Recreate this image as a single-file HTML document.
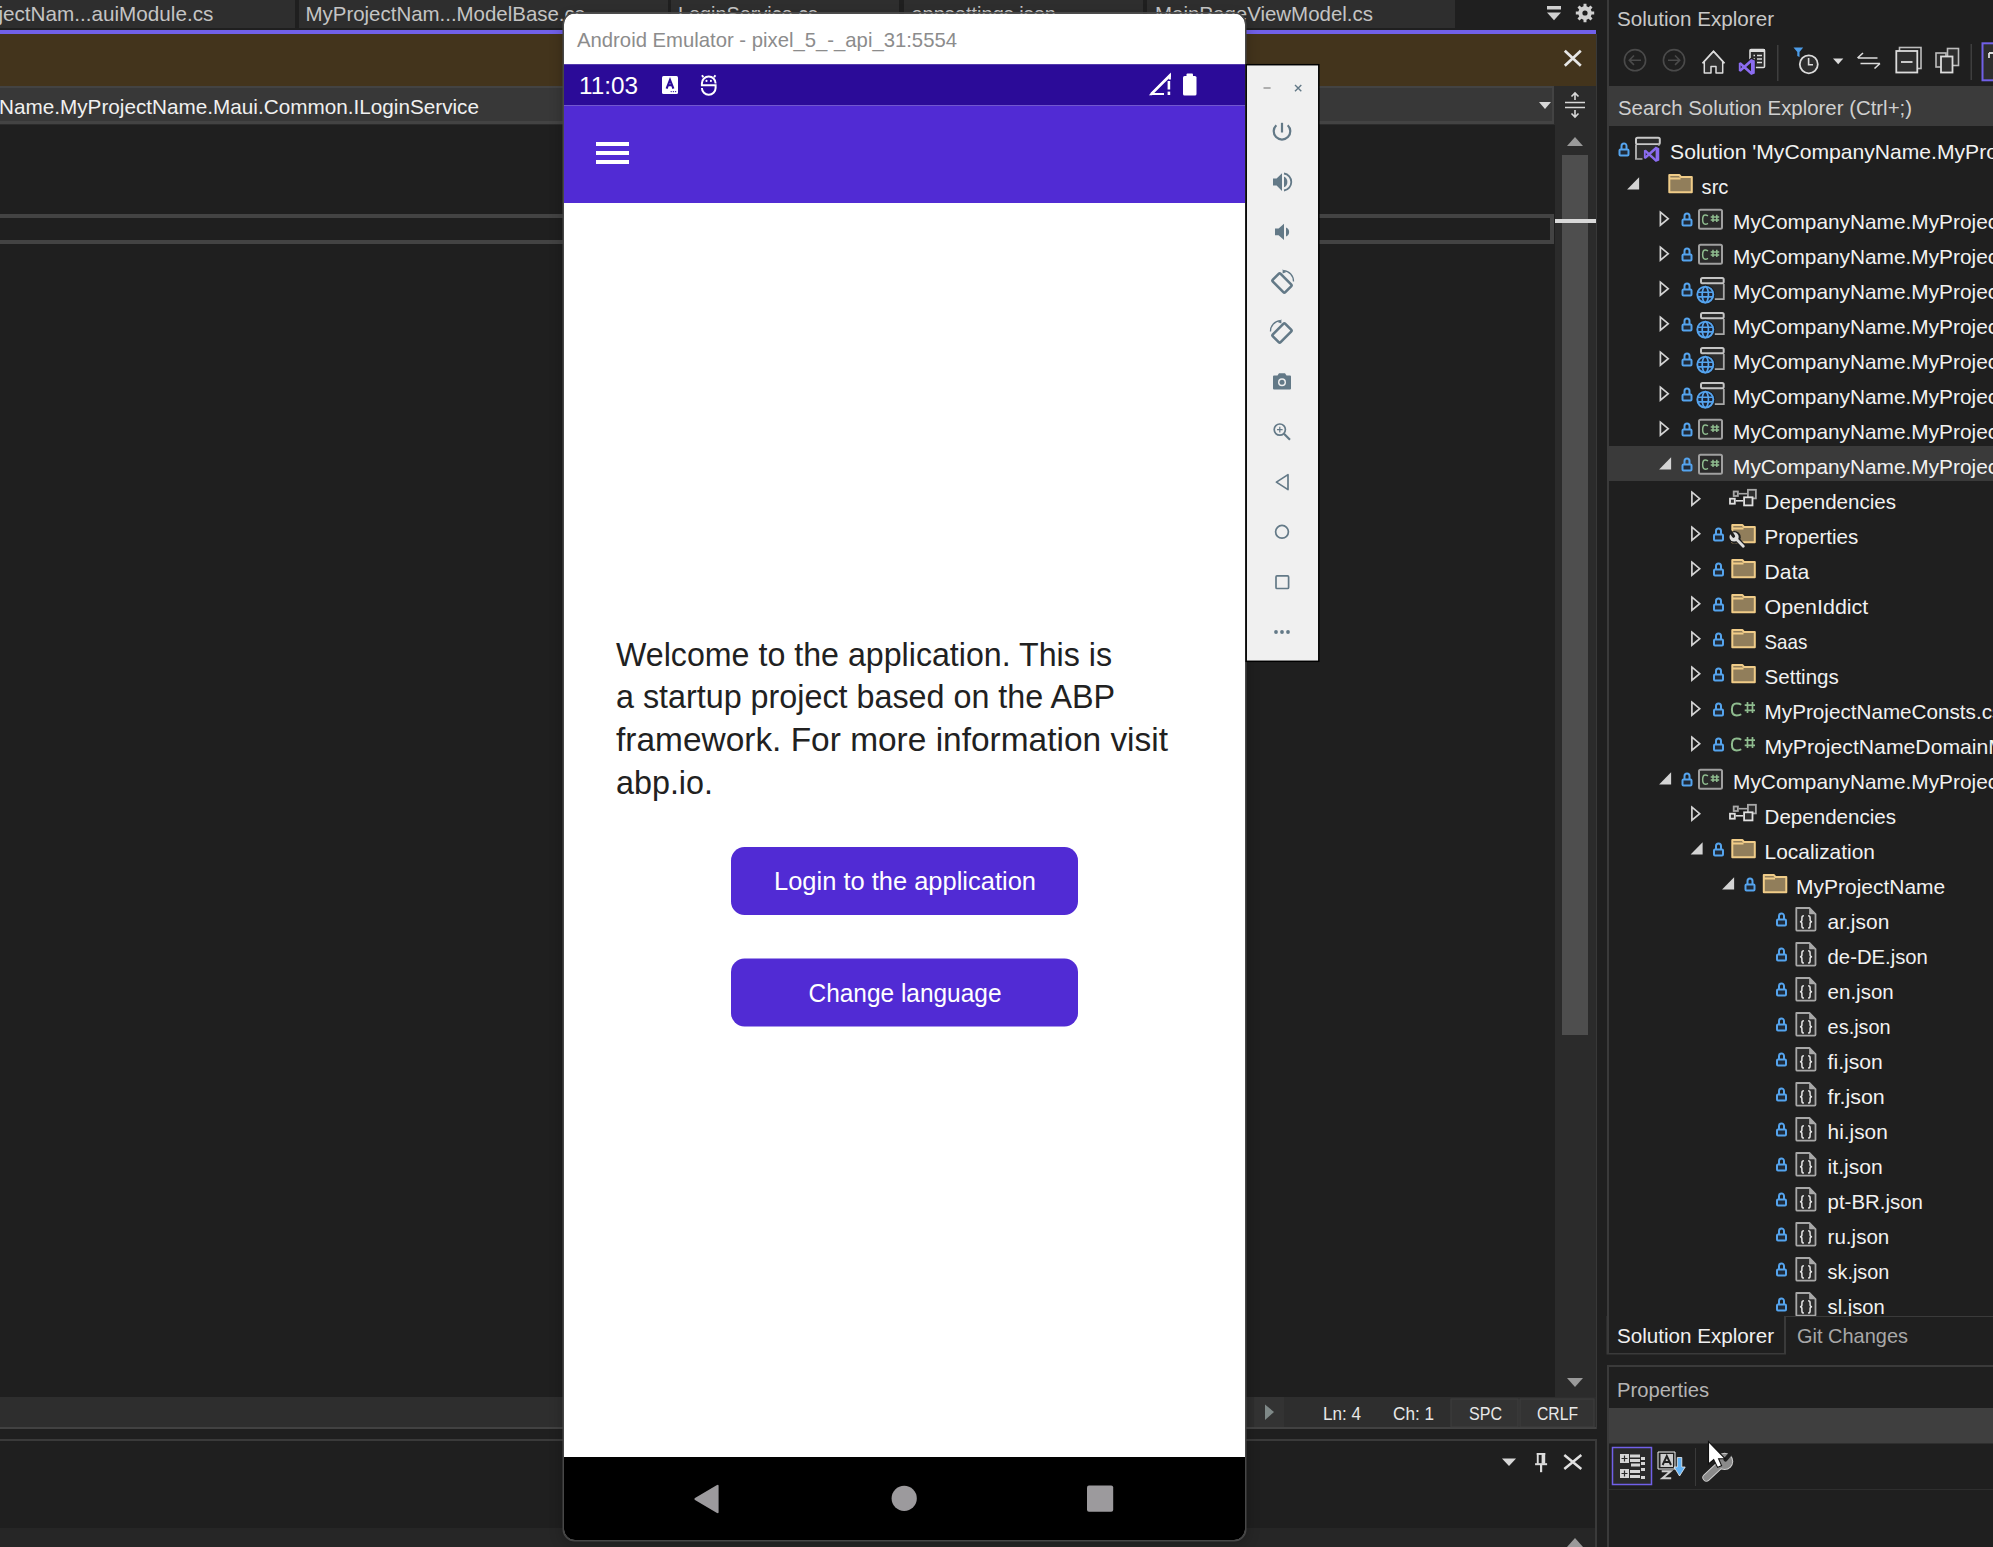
<!DOCTYPE html>
<html><head><meta charset="utf-8"><title>VS</title>
<style>html,body{margin:0;padding:0;background:#1f1f1f;overflow:hidden}svg{display:block}text{font-family:"Liberation Sans",sans-serif;white-space:pre}</style>
</head><body>
<svg width="1993" height="1547" viewBox="0 0 1993 1547">
<rect x="0" y="0" width="1993" height="1547" fill="#1f1f1f" />
<rect x="-20" y="0" width="315" height="28" fill="#2e2e2e" />
<rect x="299" y="0" width="369" height="28" fill="#2e2e2e" />
<rect x="671" y="0" width="228" height="28" fill="#2e2e2e" />
<rect x="904" y="0" width="239" height="28" fill="#2e2e2e" />
<rect x="1147" y="0" width="308" height="28" fill="#2e2e2e" />
<text x="-1.6" y="21" font-size="20.4" fill="#c4c4c4" textLength="215" lengthAdjust="spacingAndGlyphs" >jectNam...auiModule.cs</text>
<text x="305.5" y="21" font-size="20.4" fill="#c4c4c4" textLength="279.5" lengthAdjust="spacingAndGlyphs" >MyProjectNam...ModelBase.cs</text>
<text x="678" y="21" font-size="20.4" fill="#c4c4c4" textLength="140" lengthAdjust="spacingAndGlyphs" >LoginService.cs</text>
<text x="911.5" y="21" font-size="20.4" fill="#c4c4c4" textLength="144.5" lengthAdjust="spacingAndGlyphs" >appsettings.json</text>
<text x="1155" y="21" font-size="20.4" fill="#c4c4c4" textLength="218" lengthAdjust="spacingAndGlyphs" >MainPageViewModel.cs</text>
<rect x="1547" y="6" width="14" height="3.5" fill="#d0d0d0" />
<path d="M1547 12.5 L1561 12.5 L1554 20.3 Z" fill="#d0d0d0"/>
<path d="M1591.63 11.47 L1594.19 11.55 L1594.19 14.45 L1591.63 14.53 L1590.77 16.60 L1592.52 18.47 L1590.47 20.52 L1588.60 18.77 L1586.53 19.63 L1586.45 22.19 L1583.55 22.19 L1583.47 19.63 L1581.40 18.77 L1579.53 20.52 L1577.48 18.47 L1579.23 16.60 L1578.37 14.53 L1575.81 14.45 L1575.81 11.55 L1578.37 11.47 L1579.23 9.40 L1577.48 7.53 L1579.53 5.48 L1581.40 7.23 L1583.47 6.37 L1583.55 3.81 L1586.45 3.81 L1586.53 6.37 L1588.60 7.23 L1590.47 5.48 L1592.52 7.53 L1590.77 9.40 Z M1587.6 13 A2.6 2.6 0 1 0 1582.4 13 A2.6 2.6 0 1 0 1587.6 13 Z" fill="#d0d0d0" fill-rule="evenodd"/>
<rect x="0" y="30" width="1596" height="4" fill="#7160e8" />
<rect x="0" y="34" width="1596" height="52" fill="#43341c" />
<rect x="1596" y="34" width="1" height="1395" fill="#383838" />
<path d="M1564.8 50.8 L1580.8 65.8 M1580.8 50.8 L1564.8 65.8" stroke="#e6e6e6" stroke-width="2.7"/>
<rect x="0" y="86" width="1596" height="39" fill="#2b2b2b" />
<rect x="0" y="86" width="1554" height="38" fill="#434343" />
<rect x="0" y="88" width="1552" height="33" fill="#383838" />
<text x="-1" y="114" font-size="20.7" fill="#f0f0f0" textLength="480" lengthAdjust="spacingAndGlyphs" >Name.MyProjectName.Maui.Common.ILoginService</text>
<path d="M1539 102 L1551 102 L1545 109 Z" fill="#d8d8d8"/>
<g stroke="#d8d8d8" stroke-width="1.6" fill="none"><path d="M1565 102.5 H1585 M1565 107.5 H1585 M1575 93 V100 M1575 110 V117 M1571.5 96.5 L1575 93 L1578.5 96.5 M1571.5 113.5 L1575 117 L1578.5 113.5"/></g>
<rect x="0" y="125" width="1555" height="1272" fill="#1f1f1f" />
<rect x="-4" y="216" width="1556" height="26" fill="none" stroke="#434343" stroke-width="4"/>
<rect x="1555" y="125" width="41" height="1272" fill="#2b2b2b" />
<path d="M1567 146 L1583 146 L1575 137 Z" fill="#9a9a9a"/>
<rect x="1562" y="155" width="26" height="880" fill="#4e4e4e" />
<rect x="1555" y="219" width="41" height="4" fill="#d8d8d8" />
<path d="M1567 1378 L1583 1378 L1575 1387 Z" fill="#9a9a9a"/>
<rect x="0" y="1397" width="1596" height="31" fill="#2e2e2e" />
<rect x="0" y="1427" width="1596" height="2" fill="#424242" />
<rect x="1451" y="1399" width="67" height="28" fill="#333333" stroke="#3e3e3e" stroke-width="1"/>
<rect x="1520" y="1399" width="74" height="28" fill="#333333" stroke="#3e3e3e" stroke-width="1"/>
<rect x="1254" y="1397" width="30" height="30" fill="#333333" />
<path d="M1265 1404.5 L1274 1412 L1265 1420 Z" fill="#7f8988"/>
<text x="1323" y="1420" font-size="17.5" fill="#e8e8e8" textLength="38" lengthAdjust="spacingAndGlyphs" >Ln: 4</text>
<text x="1393" y="1420" font-size="17.5" fill="#e8e8e8" textLength="41" lengthAdjust="spacingAndGlyphs" >Ch: 1</text>
<text x="1469" y="1420" font-size="17.5" fill="#e8e8e8" textLength="33" lengthAdjust="spacingAndGlyphs" >SPC</text>
<text x="1537" y="1420" font-size="17.5" fill="#e8e8e8" textLength="41" lengthAdjust="spacingAndGlyphs" >CRLF</text>
<rect x="0" y="1439" width="1597" height="108" fill="#1f1f1f" />
<rect x="0" y="1439" width="1597" height="2" fill="#3a3a3a" />
<rect x="1595" y="1439" width="2" height="108" fill="#3a3a3a" />
<path d="M1502 1458.5 L1516 1458.5 L1509 1466 Z" fill="#d8d8d8"/>
<g fill="#dcdcdc"><rect x="1536.8" y="1453" width="1.9" height="10.8"/><rect x="1541.6" y="1453" width="3.6" height="10.8"/><rect x="1536.8" y="1453" width="8.4" height="1.9"/><rect x="1535.1" y="1463.2" width="12" height="2"/><rect x="1540" y="1465" width="2.2" height="7.2"/></g>
<path d="M1564.3 1455 L1581.3 1469 M1581.3 1455 L1564.3 1469" stroke="#e0e0e0" stroke-width="2.5"/>
<rect x="0" y="1528" width="1595" height="19" fill="#262626" />
<path d="M1567 1547 L1583 1547 L1575 1538 Z" fill="#9a9a9a"/>
<rect x="1607" y="0" width="2" height="1354" fill="#3a3a3a" />
<text x="1617" y="26" font-size="20.6" fill="#c8c8c8" textLength="157" lengthAdjust="spacingAndGlyphs" >Solution Explorer</text>
<circle cx="1635" cy="60.2" r="10.6" fill="none" stroke="#4a4a4a" stroke-width="1.6"/><path d="M1641 60.2 H1629.5 M1634 55.5 L1629.3 60.2 L1634 64.9" stroke="#4a4a4a" stroke-width="1.6" fill="none"/>
<circle cx="1674" cy="60.2" r="10.6" fill="none" stroke="#4a4a4a" stroke-width="1.6"/><path d="M1668 60.2 H1679.5 M1675 55.5 L1679.7 60.2 L1675 64.9" stroke="#4a4a4a" stroke-width="1.6" fill="none"/>
<path d="M1702.5 63.3 L1713.5 51.3 L1724.5 63.3" stroke="#dcdcdc" stroke-width="1.8" fill="none"/><path d="M1704.3 61.5 V73 H1711 V66.5 H1716 V73 H1722.7 V61.5 L1713.5 51.5 Z" fill="#2e2e2e" stroke="#dcdcdc" stroke-width="1.5" stroke-linejoin="round"/>
<rect x="1750" y="49.5" width="14.5" height="18" rx="1" fill="#2a2a2a" stroke="#dcdcdc" stroke-width="1.6"/><rect x="1750" y="49" width="15" height="3" fill="#dcdcdc"/>
<path d="M1753.5 55.5 H1755 M1757 55.5 H1762 M1753.5 59 H1755 M1757 59 H1762 M1757 62.5 H1762" stroke="#dcdcdc" stroke-width="1.4"/>
<rect x="1777" y="45" width="1.5" height="36" fill="#3e3e3e" />
<path d="M1793.5 47.5 H1803.2 L1799.5 52 V57 L1797.3 56 V52 Z" fill="#4c9ce8"/>
<circle cx="1808.8" cy="64.3" r="9" fill="#2e2e2e" stroke="#dcdcdc" stroke-width="1.8"/><path d="M1808.6 58 V64.8 H1813" stroke="#dcdcdc" stroke-width="1.6" fill="none"/>
<path d="M1833 58.5 H1843.3 L1838.2 64.3 Z" fill="#dcdcdc"/>
<path d="M1858 58 H1877.5 M1857.5 58 L1863 53 M1860.5 63.5 H1880 M1880 63.5 L1874.5 68.5" stroke="#dcdcdc" stroke-width="1.6" fill="none"/>
<rect x="1899.5" y="47.5" width="21.5" height="21" fill="none" stroke="#bdbdbd" stroke-width="1.6"/><rect x="1896.3" y="51" width="21" height="21.5" fill="#2e2e2e" stroke="#dcdcdc" stroke-width="1.8"/><path d="M1901 62 H1912.5" stroke="#dcdcdc" stroke-width="1.8"/>
<rect x="1947.5" y="48.5" width="11" height="17" fill="#2e2e2e" stroke="#bdbdbd" stroke-width="1.6"/><rect x="1936" y="53" width="10" height="14" fill="#2e2e2e" stroke="#bdbdbd" stroke-width="1.6"/><rect x="1941" y="56.5" width="11.5" height="16" fill="#2e2e2e" stroke="#dcdcdc" stroke-width="1.8"/>
<rect x="1970.5" y="44" width="1.5" height="36" fill="#3e3e3e" />
<rect x="1982.5" y="43.3" width="20" height="37" fill="#2e2e2e" stroke="#7160e8" stroke-width="2"/><path d="M1989 53 H1993 M1989 53 V58" stroke="#dcdcdc" stroke-width="1.8"/>
<rect x="1609" y="86" width="384" height="40" fill="#3b3b3b" />
<text x="1618" y="114.5" font-size="20.4" fill="#d0d0d0" textLength="294" lengthAdjust="spacingAndGlyphs" >Search Solution Explorer (Ctrl+;)</text>
<rect x="1609" y="446" width="384" height="35" fill="#3a3a3a" />
<svg x="0" y="0" width="1993" height="1316" overflow="hidden">
<path d="M1621.5 149.39999999999998 V145.89999999999998 A2.5 2.5 0 0 1 1626.5 145.89999999999998 V149.39999999999998" stroke="#55a4ee" stroke-width="2" fill="none"/>
<rect x="1619.5" y="149.39999999999998" width="9" height="6.2" fill="#1f2a38" stroke="#55a4ee" stroke-width="2" rx="1"/>
<path d="M1636.0 144.7 V158.7 H1642.5" fill="none" stroke="#a8a8a8" stroke-width="2"/>
<rect x="1636.0" y="137.79999999999998" width="23.8" height="6.4" rx="1.5" fill="#2a2a2a" stroke="#c8c8c8" stroke-width="2"/>
<path d="M1658.8 144.2 V145.7" stroke="#a8a8a8" stroke-width="2"/>
<rect x="1637.0" y="145.2" width="21" height="13" fill="#2c2c2c"/>
<g transform="translate(1643.9 146.6) scale(0.96)" fill="#8b6cf0"><path d="M0 3.9 L1.9 3.2 V12.8 L0 12.1 Z"/><path d="M12.2 0 L16 1.6 V14.4 L12.2 16 Z"/><path d="M1.2 11.8 L13 1.2 M1.2 4.2 L13 14.8" stroke="#8b6cf0" stroke-width="2.6" stroke-linecap="butt"/></g>
<text x="1670.1" y="158.7" font-size="20.3" fill="#f2f2f2" textLength="597.1" lengthAdjust="spacingAndGlyphs" >Solution 'MyCompanyName.MyProjectName' (12 of 12 projects)</text>
<path d="M1639.1 177.29999999999998 L1639.1 189.39999999999998 L1627.1 189.39999999999998 Z" fill="#d4d4d4"/>
<path d="M1669.3 192.2 V175.1 H1679.5 L1681.1 177.1 H1691.8 V192.2 Z" fill="#917e5b" stroke="#f0cc88" stroke-width="2" stroke-linejoin="round"/>
<path d="M1669.3 178.5 H1680.5" stroke="#f0cc88" stroke-width="2"/>
<text x="1701.6" y="193.7" font-size="20.3" fill="#f2f2f2" textLength="26.8" lengthAdjust="spacingAndGlyphs" >src</text>
<path d="M1660.3999999999999 212.2 L1668.1999999999998 218.7 L1660.3999999999999 225.2 Z" fill="none" stroke="#d4d4d4" stroke-width="1.7" stroke-linejoin="miter"/>
<path d="M1684.5 219.39999999999998 V215.89999999999998 A2.5 2.5 0 0 1 1689.5 215.89999999999998 V219.39999999999998" stroke="#55a4ee" stroke-width="2" fill="none"/>
<rect x="1682.5" y="219.39999999999998" width="9" height="6.2" fill="#1f2a38" stroke="#55a4ee" stroke-width="2" rx="1"/>
<rect x="1699.0" y="209.7" width="23" height="19" rx="1.5" fill="#2a2a2a" stroke="#a0a0a0" stroke-width="2"/>
<path d="M1708.0 215.84 Q1706.4 214.89999999999998 1705.33 214.89999999999998 Q1702.65 214.89999999999998 1702.65 219.60 Q1702.65 224.29999999999998 1705.33 224.29999999999998 Q1706.4 224.29999999999998 1708.0 223.36" stroke="#8fbc8f" stroke-width="1.5" fill="none"/>
<path d="M1713.0 214.79999999999998 V222.1 M1716.8 214.79999999999998 V222.1 M1710.7 217.1 H1719.2 M1710.7 219.89999999999998 H1719.2" stroke="#8fbc8f" stroke-width="1.5" fill="none"/>
<text x="1733.1" y="228.7" font-size="20.3" fill="#f2f2f2" textLength="434.07" lengthAdjust="spacingAndGlyphs" >MyCompanyName.MyProjectName.Application</text>
<path d="M1660.3999999999999 247.2 L1668.1999999999998 253.7 L1660.3999999999999 260.2 Z" fill="none" stroke="#d4d4d4" stroke-width="1.7" stroke-linejoin="miter"/>
<path d="M1684.5 254.39999999999998 V250.89999999999998 A2.5 2.5 0 0 1 1689.5 250.89999999999998 V254.39999999999998" stroke="#55a4ee" stroke-width="2" fill="none"/>
<rect x="1682.5" y="254.39999999999998" width="9" height="6.2" fill="#1f2a38" stroke="#55a4ee" stroke-width="2" rx="1"/>
<rect x="1699.0" y="244.7" width="23" height="19" rx="1.5" fill="#2a2a2a" stroke="#a0a0a0" stroke-width="2"/>
<path d="M1708.0 250.84 Q1706.4 249.89999999999998 1705.33 249.89999999999998 Q1702.65 249.89999999999998 1702.65 254.60 Q1702.65 259.3 1705.33 259.3 Q1706.4 259.3 1708.0 258.36" stroke="#8fbc8f" stroke-width="1.5" fill="none"/>
<path d="M1713.0 249.79999999999998 V257.09999999999997 M1716.8 249.79999999999998 V257.09999999999997 M1710.7 252.1 H1719.2 M1710.7 254.89999999999998 H1719.2" stroke="#8fbc8f" stroke-width="1.5" fill="none"/>
<text x="1733.1" y="263.7" font-size="20.3" fill="#f2f2f2" textLength="528.99" lengthAdjust="spacingAndGlyphs" >MyCompanyName.MyProjectName.Application.Contracts</text>
<path d="M1660.3999999999999 282.2 L1668.1999999999998 288.7 L1660.3999999999999 295.2 Z" fill="none" stroke="#d4d4d4" stroke-width="1.7" stroke-linejoin="miter"/>
<path d="M1684.5 289.4 V285.9 A2.5 2.5 0 0 1 1689.5 285.9 V289.4" stroke="#55a4ee" stroke-width="2" fill="none"/>
<rect x="1682.5" y="289.4" width="9" height="6.2" fill="#1f2a38" stroke="#55a4ee" stroke-width="2" rx="1"/>
<rect x="1701.0" y="284.09999999999997" width="22.7" height="15" fill="#2c2c2c"/>
<path d="M1723.8 284.09999999999997 V299.2 H1714.8" fill="none" stroke="#a8a8a8" stroke-width="1.8"/>
<rect x="1701.0" y="277.9" width="22.7" height="5.3" rx="1.5" fill="#2a2a2a" stroke="#c4c4c4" stroke-width="2"/>
<circle cx="1705.3" cy="294.59999999999997" r="10" fill="#1f1f1f"/>
<circle cx="1705.3" cy="294.59999999999997" r="8.9" fill="#1c2233"/>
<g stroke="#55a4ee" fill="none"><circle cx="1705.3" cy="294.59999999999997" r="8" stroke-width="1.9"/><ellipse cx="1705.3" cy="294.59999999999997" rx="3.1" ry="8" stroke-width="1.7"/><path d="M1697.3 292.29999999999995 H1713.3 M1697.3 296.9 H1713.3" stroke-width="1.6"/></g>
<text x="1733.1" y="298.7" font-size="20.3" fill="#f2f2f2" textLength="436.37" lengthAdjust="spacingAndGlyphs" >MyCompanyName.MyProjectName.AuthServer</text>
<path d="M1660.3999999999999 317.2 L1668.1999999999998 323.7 L1660.3999999999999 330.2 Z" fill="none" stroke="#d4d4d4" stroke-width="1.7" stroke-linejoin="miter"/>
<path d="M1684.5 324.4 V320.9 A2.5 2.5 0 0 1 1689.5 320.9 V324.4" stroke="#55a4ee" stroke-width="2" fill="none"/>
<rect x="1682.5" y="324.4" width="9" height="6.2" fill="#1f2a38" stroke="#55a4ee" stroke-width="2" rx="1"/>
<rect x="1701.0" y="319.09999999999997" width="22.7" height="15" fill="#2c2c2c"/>
<path d="M1723.8 319.09999999999997 V334.2 H1714.8" fill="none" stroke="#a8a8a8" stroke-width="1.8"/>
<rect x="1701.0" y="312.9" width="22.7" height="5.3" rx="1.5" fill="#2a2a2a" stroke="#c4c4c4" stroke-width="2"/>
<circle cx="1705.3" cy="329.59999999999997" r="10" fill="#1f1f1f"/>
<circle cx="1705.3" cy="329.59999999999997" r="8.9" fill="#1c2233"/>
<g stroke="#55a4ee" fill="none"><circle cx="1705.3" cy="329.59999999999997" r="8" stroke-width="1.9"/><ellipse cx="1705.3" cy="329.59999999999997" rx="3.1" ry="8" stroke-width="1.7"/><path d="M1697.3 327.29999999999995 H1713.3 M1697.3 331.9 H1713.3" stroke-width="1.6"/></g>
<text x="1733.1" y="333.7" font-size="20.3" fill="#f2f2f2" textLength="391.22" lengthAdjust="spacingAndGlyphs" >MyCompanyName.MyProjectName.Blazor</text>
<path d="M1660.3999999999999 352.2 L1668.1999999999998 358.7 L1660.3999999999999 365.2 Z" fill="none" stroke="#d4d4d4" stroke-width="1.7" stroke-linejoin="miter"/>
<path d="M1684.5 359.4 V355.9 A2.5 2.5 0 0 1 1689.5 355.9 V359.4" stroke="#55a4ee" stroke-width="2" fill="none"/>
<rect x="1682.5" y="359.4" width="9" height="6.2" fill="#1f2a38" stroke="#55a4ee" stroke-width="2" rx="1"/>
<rect x="1701.0" y="354.09999999999997" width="22.7" height="15" fill="#2c2c2c"/>
<path d="M1723.8 354.09999999999997 V369.2 H1714.8" fill="none" stroke="#a8a8a8" stroke-width="1.8"/>
<rect x="1701.0" y="347.9" width="22.7" height="5.3" rx="1.5" fill="#2a2a2a" stroke="#c4c4c4" stroke-width="2"/>
<circle cx="1705.3" cy="364.59999999999997" r="10" fill="#1f1f1f"/>
<circle cx="1705.3" cy="364.59999999999997" r="8.9" fill="#1c2233"/>
<g stroke="#55a4ee" fill="none"><circle cx="1705.3" cy="364.59999999999997" r="8" stroke-width="1.9"/><ellipse cx="1705.3" cy="364.59999999999997" rx="3.1" ry="8" stroke-width="1.7"/><path d="M1697.3 362.29999999999995 H1713.3 M1697.3 366.9 H1713.3" stroke-width="1.6"/></g>
<text x="1733.1" y="368.7" font-size="20.3" fill="#f2f2f2" textLength="449.1" lengthAdjust="spacingAndGlyphs" >MyCompanyName.MyProjectName.HttpApi.Host</text>
<path d="M1660.3999999999999 387.2 L1668.1999999999998 393.7 L1660.3999999999999 400.2 Z" fill="none" stroke="#d4d4d4" stroke-width="1.7" stroke-linejoin="miter"/>
<path d="M1684.5 394.4 V390.9 A2.5 2.5 0 0 1 1689.5 390.9 V394.4" stroke="#55a4ee" stroke-width="2" fill="none"/>
<rect x="1682.5" y="394.4" width="9" height="6.2" fill="#1f2a38" stroke="#55a4ee" stroke-width="2" rx="1"/>
<rect x="1701.0" y="389.09999999999997" width="22.7" height="15" fill="#2c2c2c"/>
<path d="M1723.8 389.09999999999997 V404.2 H1714.8" fill="none" stroke="#a8a8a8" stroke-width="1.8"/>
<rect x="1701.0" y="382.9" width="22.7" height="5.3" rx="1.5" fill="#2a2a2a" stroke="#c4c4c4" stroke-width="2"/>
<circle cx="1705.3" cy="399.59999999999997" r="10" fill="#1f1f1f"/>
<circle cx="1705.3" cy="399.59999999999997" r="8.9" fill="#1c2233"/>
<g stroke="#55a4ee" fill="none"><circle cx="1705.3" cy="399.59999999999997" r="8" stroke-width="1.9"/><ellipse cx="1705.3" cy="399.59999999999997" rx="3.1" ry="8" stroke-width="1.7"/><path d="M1697.3 397.29999999999995 H1713.3 M1697.3 401.9 H1713.3" stroke-width="1.6"/></g>
<text x="1733.1" y="403.7" font-size="20.3" fill="#f2f2f2" textLength="437.14" lengthAdjust="spacingAndGlyphs" >MyCompanyName.MyProjectName.Web.Public</text>
<path d="M1660.3999999999999 422.2 L1668.1999999999998 428.7 L1660.3999999999999 435.2 Z" fill="none" stroke="#d4d4d4" stroke-width="1.7" stroke-linejoin="miter"/>
<path d="M1684.5 429.4 V425.9 A2.5 2.5 0 0 1 1689.5 425.9 V429.4" stroke="#55a4ee" stroke-width="2" fill="none"/>
<rect x="1682.5" y="429.4" width="9" height="6.2" fill="#1f2a38" stroke="#55a4ee" stroke-width="2" rx="1"/>
<rect x="1699.0" y="419.7" width="23" height="19" rx="1.5" fill="#2a2a2a" stroke="#a0a0a0" stroke-width="2"/>
<path d="M1708.0 425.84 Q1706.4 424.9 1705.33 424.9 Q1702.65 424.9 1702.65 429.60 Q1702.65 434.3 1705.33 434.3 Q1706.4 434.3 1708.0 433.36" stroke="#8fbc8f" stroke-width="1.5" fill="none"/>
<path d="M1713.0 424.8 V432.09999999999997 M1716.8 424.8 V432.09999999999997 M1710.7 427.09999999999997 H1719.2 M1710.7 429.9 H1719.2" stroke="#8fbc8f" stroke-width="1.5" fill="none"/>
<text x="1733.1" y="438.7" font-size="20.3" fill="#f2f2f2" textLength="435.19" lengthAdjust="spacingAndGlyphs" >MyCompanyName.MyProjectName.DbMigrator</text>
<path d="M1671.1 457.3 L1671.1 469.4 L1659.1 469.4 Z" fill="#d4d4d4"/>
<path d="M1684.5 464.4 V460.9 A2.5 2.5 0 0 1 1689.5 460.9 V464.4" stroke="#55a4ee" stroke-width="2" fill="none"/>
<rect x="1682.5" y="464.4" width="9" height="6.2" fill="#1f2a38" stroke="#55a4ee" stroke-width="2" rx="1"/>
<rect x="1699.0" y="454.7" width="23" height="19" rx="1.5" fill="#2a2a2a" stroke="#a0a0a0" stroke-width="2"/>
<path d="M1708.0 460.84 Q1706.4 459.9 1705.33 459.9 Q1702.65 459.9 1702.65 464.60 Q1702.65 469.3 1705.33 469.3 Q1706.4 469.3 1708.0 468.36" stroke="#8fbc8f" stroke-width="1.5" fill="none"/>
<path d="M1713.0 459.8 V467.09999999999997 M1716.8 459.8 V467.09999999999997 M1710.7 462.09999999999997 H1719.2 M1710.7 464.9 H1719.2" stroke="#8fbc8f" stroke-width="1.5" fill="none"/>
<text x="1733.1" y="473.7" font-size="20.3" fill="#f2f2f2" textLength="403.95" lengthAdjust="spacingAndGlyphs" >MyCompanyName.MyProjectName.Domain</text>
<path d="M1691.8999999999999 492.2 L1699.6999999999998 498.7 L1691.8999999999999 505.2 Z" fill="none" stroke="#d4d4d4" stroke-width="1.7" stroke-linejoin="miter"/>
<path d="M1738.8 493.7 H1747.0" stroke="#a8a8a8" stroke-width="1.6"/>
<g fill="#2e2e2e" stroke="#a8a8a8" stroke-width="1.8"><rect x="1733.7" y="491.5" width="4.2" height="4.5"/><rect x="1747.9" y="489.8" width="8" height="8.6"/></g>
<path d="M1735.7 500.8 H1743.2" stroke="#e0e0e0" stroke-width="1.6"/>
<g fill="#2e2e2e" stroke="#e0e0e0" stroke-width="1.8"><rect x="1730.0" y="498.7" width="4.8" height="5"/><rect x="1744.1" y="497.3" width="8.4" height="8.1"/></g>
<text x="1764.6" y="508.7" font-size="20.3" fill="#f2f2f2" textLength="131.4" lengthAdjust="spacingAndGlyphs" >Dependencies</text>
<path d="M1691.8999999999999 527.2 L1699.6999999999998 533.7 L1691.8999999999999 540.2 Z" fill="none" stroke="#d4d4d4" stroke-width="1.7" stroke-linejoin="miter"/>
<path d="M1716.0 534.4000000000001 V530.9000000000001 A2.5 2.5 0 0 1 1721.0 530.9000000000001 V534.4000000000001" stroke="#55a4ee" stroke-width="2" fill="none"/>
<rect x="1714.0" y="534.4000000000001" width="9" height="6.2" fill="#1f2a38" stroke="#55a4ee" stroke-width="2" rx="1"/>
<path d="M1732.3 542.2 V525.1 H1742.5 L1744.1 527.1 H1754.8 V542.2 Z" fill="#917e5b" stroke="#f0cc88" stroke-width="2" stroke-linejoin="round"/>
<path d="M1732.3 528.5 H1743.5" stroke="#f0cc88" stroke-width="2"/>
<path d="M1734.5 536.7 L1743.5 546.2" stroke="#1f1f1f" stroke-width="5" stroke-linecap="round"/>
<circle cx="1734.5" cy="537.2" r="6.2" fill="#1f1f1f"/>
<path d="M1734.5 537.2 L1743.3 546.2" stroke="#dedede" stroke-width="2.8" stroke-linecap="round"/>
<circle cx="1734.1" cy="536.9000000000001" r="4.6" fill="#dedede"/>
<path d="M1733.5 536.2 L1730.5 531.7" stroke="#1f1f1f" stroke-width="3.2" stroke-linecap="round"/>
<text x="1764.6" y="543.7" font-size="20.3" fill="#f2f2f2" textLength="93.6" lengthAdjust="spacingAndGlyphs" >Properties</text>
<path d="M1691.8999999999999 562.2 L1699.6999999999998 568.7 L1691.8999999999999 575.2 Z" fill="none" stroke="#d4d4d4" stroke-width="1.7" stroke-linejoin="miter"/>
<path d="M1716.0 569.4000000000001 V565.9000000000001 A2.5 2.5 0 0 1 1721.0 565.9000000000001 V569.4000000000001" stroke="#55a4ee" stroke-width="2" fill="none"/>
<rect x="1714.0" y="569.4000000000001" width="9" height="6.2" fill="#1f2a38" stroke="#55a4ee" stroke-width="2" rx="1"/>
<path d="M1732.3 577.2 V560.1 H1742.5 L1744.1 562.1 H1754.8 V577.2 Z" fill="#917e5b" stroke="#f0cc88" stroke-width="2" stroke-linejoin="round"/>
<path d="M1732.3 563.5 H1743.5" stroke="#f0cc88" stroke-width="2"/>
<text x="1764.6" y="578.7" font-size="20.3" fill="#f2f2f2" textLength="44.7" lengthAdjust="spacingAndGlyphs" >Data</text>
<path d="M1691.8999999999999 597.2 L1699.6999999999998 603.7 L1691.8999999999999 610.2 Z" fill="none" stroke="#d4d4d4" stroke-width="1.7" stroke-linejoin="miter"/>
<path d="M1716.0 604.4000000000001 V600.9000000000001 A2.5 2.5 0 0 1 1721.0 600.9000000000001 V604.4000000000001" stroke="#55a4ee" stroke-width="2" fill="none"/>
<rect x="1714.0" y="604.4000000000001" width="9" height="6.2" fill="#1f2a38" stroke="#55a4ee" stroke-width="2" rx="1"/>
<path d="M1732.3 612.2 V595.1 H1742.5 L1744.1 597.1 H1754.8 V612.2 Z" fill="#917e5b" stroke="#f0cc88" stroke-width="2" stroke-linejoin="round"/>
<path d="M1732.3 598.5 H1743.5" stroke="#f0cc88" stroke-width="2"/>
<text x="1764.6" y="613.7" font-size="20.3" fill="#f2f2f2" textLength="103.69999999999999" lengthAdjust="spacingAndGlyphs" >OpenIddict</text>
<path d="M1691.8999999999999 632.2 L1699.6999999999998 638.7 L1691.8999999999999 645.2 Z" fill="none" stroke="#d4d4d4" stroke-width="1.7" stroke-linejoin="miter"/>
<path d="M1716.0 639.4000000000001 V635.9000000000001 A2.5 2.5 0 0 1 1721.0 635.9000000000001 V639.4000000000001" stroke="#55a4ee" stroke-width="2" fill="none"/>
<rect x="1714.0" y="639.4000000000001" width="9" height="6.2" fill="#1f2a38" stroke="#55a4ee" stroke-width="2" rx="1"/>
<path d="M1732.3 647.2 V630.1 H1742.5 L1744.1 632.1 H1754.8 V647.2 Z" fill="#917e5b" stroke="#f0cc88" stroke-width="2" stroke-linejoin="round"/>
<path d="M1732.3 633.5 H1743.5" stroke="#f0cc88" stroke-width="2"/>
<text x="1764.6" y="648.7" font-size="20.3" fill="#f2f2f2" textLength="42.7" lengthAdjust="spacingAndGlyphs" >Saas</text>
<path d="M1691.8999999999999 667.2 L1699.6999999999998 673.7 L1691.8999999999999 680.2 Z" fill="none" stroke="#d4d4d4" stroke-width="1.7" stroke-linejoin="miter"/>
<path d="M1716.0 674.4000000000001 V670.9000000000001 A2.5 2.5 0 0 1 1721.0 670.9000000000001 V674.4000000000001" stroke="#55a4ee" stroke-width="2" fill="none"/>
<rect x="1714.0" y="674.4000000000001" width="9" height="6.2" fill="#1f2a38" stroke="#55a4ee" stroke-width="2" rx="1"/>
<path d="M1732.3 682.2 V665.1 H1742.5 L1744.1 667.1 H1754.8 V682.2 Z" fill="#917e5b" stroke="#f0cc88" stroke-width="2" stroke-linejoin="round"/>
<path d="M1732.3 668.5 H1743.5" stroke="#f0cc88" stroke-width="2"/>
<text x="1764.6" y="683.7" font-size="20.3" fill="#f2f2f2" textLength="74.19999999999999" lengthAdjust="spacingAndGlyphs" >Settings</text>
<path d="M1691.8999999999999 702.2 L1699.6999999999998 708.7 L1691.8999999999999 715.2 Z" fill="none" stroke="#d4d4d4" stroke-width="1.7" stroke-linejoin="miter"/>
<path d="M1716.0 709.4000000000001 V705.9000000000001 A2.5 2.5 0 0 1 1721.0 705.9000000000001 V709.4000000000001" stroke="#55a4ee" stroke-width="2" fill="none"/>
<rect x="1714.0" y="709.4000000000001" width="9" height="6.2" fill="#1f2a38" stroke="#55a4ee" stroke-width="2" rx="1"/>
<path d="M1741.2 704.78 Q1739.6000000000001 703.6 1736.55 703.6 Q1731.9 703.6 1731.9 709.50 Q1731.9 715.4000000000001 1736.55 715.4000000000001 Q1739.6000000000001 715.4000000000001 1741.2 714.22" stroke="#8fbc8f" stroke-width="2" fill="none"/>
<path d="M1747.5 702.1 V713.1 M1752.5 702.1 V713.1 M1744.7 705.1 H1755.0 M1744.7 710.3000000000001 H1755.0" stroke="#8fbc8f" stroke-width="1.7" fill="none"/>
<text x="1764.6" y="718.7" font-size="20.3" fill="#f2f2f2" textLength="237.72" lengthAdjust="spacingAndGlyphs" >MyProjectNameConsts.cs</text>
<path d="M1691.8999999999999 737.2 L1699.6999999999998 743.7 L1691.8999999999999 750.2 Z" fill="none" stroke="#d4d4d4" stroke-width="1.7" stroke-linejoin="miter"/>
<path d="M1716.0 744.4000000000001 V740.9000000000001 A2.5 2.5 0 0 1 1721.0 740.9000000000001 V744.4000000000001" stroke="#55a4ee" stroke-width="2" fill="none"/>
<rect x="1714.0" y="744.4000000000001" width="9" height="6.2" fill="#1f2a38" stroke="#55a4ee" stroke-width="2" rx="1"/>
<path d="M1741.2 739.78 Q1739.6000000000001 738.6 1736.55 738.6 Q1731.9 738.6 1731.9 744.50 Q1731.9 750.4000000000001 1736.55 750.4000000000001 Q1739.6000000000001 750.4000000000001 1741.2 749.22" stroke="#8fbc8f" stroke-width="2" fill="none"/>
<path d="M1747.5 737.1 V748.1 M1752.5 737.1 V748.1 M1744.7 740.1 H1755.0 M1744.7 745.3000000000001 H1755.0" stroke="#8fbc8f" stroke-width="1.7" fill="none"/>
<text x="1764.6" y="753.7" font-size="20.3" fill="#f2f2f2" textLength="320.36" lengthAdjust="spacingAndGlyphs" >MyProjectNameDomainModule.cs</text>
<path d="M1671.1 772.3000000000001 L1671.1 784.4000000000001 L1659.1 784.4000000000001 Z" fill="#d4d4d4"/>
<path d="M1684.5 779.4000000000001 V775.9000000000001 A2.5 2.5 0 0 1 1689.5 775.9000000000001 V779.4000000000001" stroke="#55a4ee" stroke-width="2" fill="none"/>
<rect x="1682.5" y="779.4000000000001" width="9" height="6.2" fill="#1f2a38" stroke="#55a4ee" stroke-width="2" rx="1"/>
<rect x="1699.0" y="769.7" width="23" height="19" rx="1.5" fill="#2a2a2a" stroke="#a0a0a0" stroke-width="2"/>
<path d="M1708.0 775.84 Q1706.4 774.9000000000001 1705.33 774.9000000000001 Q1702.65 774.9000000000001 1702.65 779.60 Q1702.65 784.3000000000001 1705.33 784.3000000000001 Q1706.4 784.3000000000001 1708.0 783.36" stroke="#8fbc8f" stroke-width="1.5" fill="none"/>
<path d="M1713.0 774.8000000000001 V782.1 M1716.8 774.8000000000001 V782.1 M1710.7 777.1 H1719.2 M1710.7 779.9000000000001 H1719.2" stroke="#8fbc8f" stroke-width="1.5" fill="none"/>
<text x="1733.1" y="788.7" font-size="20.3" fill="#f2f2f2" textLength="476.9" lengthAdjust="spacingAndGlyphs" >MyCompanyName.MyProjectName.Domain.Shared</text>
<path d="M1691.8999999999999 807.2 L1699.6999999999998 813.7 L1691.8999999999999 820.2 Z" fill="none" stroke="#d4d4d4" stroke-width="1.7" stroke-linejoin="miter"/>
<path d="M1738.8 808.7 H1747.0" stroke="#a8a8a8" stroke-width="1.6"/>
<g fill="#2e2e2e" stroke="#a8a8a8" stroke-width="1.8"><rect x="1733.7" y="806.5" width="4.2" height="4.5"/><rect x="1747.9" y="804.8000000000001" width="8" height="8.6"/></g>
<path d="M1735.7 815.8000000000001 H1743.2" stroke="#e0e0e0" stroke-width="1.6"/>
<g fill="#2e2e2e" stroke="#e0e0e0" stroke-width="1.8"><rect x="1730.0" y="813.7" width="4.8" height="5"/><rect x="1744.1" y="812.3000000000001" width="8.4" height="8.1"/></g>
<text x="1764.6" y="823.7" font-size="20.3" fill="#f2f2f2" textLength="131.4" lengthAdjust="spacingAndGlyphs" >Dependencies</text>
<path d="M1702.6 842.3000000000001 L1702.6 854.4000000000001 L1690.6 854.4000000000001 Z" fill="#d4d4d4"/>
<path d="M1716.0 849.4000000000001 V845.9000000000001 A2.5 2.5 0 0 1 1721.0 845.9000000000001 V849.4000000000001" stroke="#55a4ee" stroke-width="2" fill="none"/>
<rect x="1714.0" y="849.4000000000001" width="9" height="6.2" fill="#1f2a38" stroke="#55a4ee" stroke-width="2" rx="1"/>
<path d="M1732.3 857.2 V840.1 H1742.5 L1744.1 842.1 H1754.8 V857.2 Z" fill="#917e5b" stroke="#f0cc88" stroke-width="2" stroke-linejoin="round"/>
<path d="M1732.3 843.5 H1743.5" stroke="#f0cc88" stroke-width="2"/>
<text x="1764.6" y="858.7" font-size="20.3" fill="#f2f2f2" textLength="110.3" lengthAdjust="spacingAndGlyphs" >Localization</text>
<path d="M1734.1 877.3000000000001 L1734.1 889.4000000000001 L1722.1 889.4000000000001 Z" fill="#d4d4d4"/>
<path d="M1747.5 884.4000000000001 V880.9000000000001 A2.5 2.5 0 0 1 1752.5 880.9000000000001 V884.4000000000001" stroke="#55a4ee" stroke-width="2" fill="none"/>
<rect x="1745.5" y="884.4000000000001" width="9" height="6.2" fill="#1f2a38" stroke="#55a4ee" stroke-width="2" rx="1"/>
<path d="M1763.8 892.2 V875.1 H1774.0 L1775.6 877.1 H1786.3 V892.2 Z" fill="#917e5b" stroke="#f0cc88" stroke-width="2" stroke-linejoin="round"/>
<path d="M1763.8 878.5 H1775.0" stroke="#f0cc88" stroke-width="2"/>
<text x="1796.1" y="893.7" font-size="20.3" fill="#f2f2f2" textLength="149.1" lengthAdjust="spacingAndGlyphs" >MyProjectName</text>
<path d="M1779.0 919.4000000000001 V915.9000000000001 A2.5 2.5 0 0 1 1784.0 915.9000000000001 V919.4000000000001" stroke="#55a4ee" stroke-width="2" fill="none"/>
<rect x="1777.0" y="919.4000000000001" width="9" height="6.2" fill="#1f2a38" stroke="#55a4ee" stroke-width="2" rx="1"/>
<path d="M1796.3 908.0 H1809.4 L1815.5 914.1 V929.8000000000001 Q1815.5 930.7 1814.5 930.7 H1797.3 Q1796.3 930.7 1796.3 929.7 Z" fill="#2c2c2c" stroke="#a8a8a8" stroke-width="1.8" stroke-linejoin="round"/>
<path d="M1809.1 907.2 L1816.3 914.3000000000001 H1809.1 Z" fill="#a8a8a8"/>
<path d="M1803.9 915.8000000000001 Q1801.9 915.8000000000001 1801.9 917.9000000000001 V920.1 Q1801.9 921.8000000000001 1799.9 921.8000000000001 Q1801.9 921.8000000000001 1801.9 923.6 V925.9000000000001 Q1801.9 928.0 1803.9 928.0" stroke="#e4e4e4" stroke-width="1.5" fill="none"/>
<path d="M1808.1 915.8000000000001 Q1810.1 915.8000000000001 1810.1 917.9000000000001 V920.1 Q1810.1 921.8000000000001 1812.1 921.8000000000001 Q1810.1 921.8000000000001 1810.1 923.6 V925.9000000000001 Q1810.1 928.0 1808.1 928.0" stroke="#e4e4e4" stroke-width="1.5" fill="none"/>
<text x="1827.6" y="928.7" font-size="20.3" fill="#f2f2f2" textLength="61.7" lengthAdjust="spacingAndGlyphs" >ar.json</text>
<path d="M1779.0 954.4000000000001 V950.9000000000001 A2.5 2.5 0 0 1 1784.0 950.9000000000001 V954.4000000000001" stroke="#55a4ee" stroke-width="2" fill="none"/>
<rect x="1777.0" y="954.4000000000001" width="9" height="6.2" fill="#1f2a38" stroke="#55a4ee" stroke-width="2" rx="1"/>
<path d="M1796.3 943.0 H1809.4 L1815.5 949.1 V964.8000000000001 Q1815.5 965.7 1814.5 965.7 H1797.3 Q1796.3 965.7 1796.3 964.7 Z" fill="#2c2c2c" stroke="#a8a8a8" stroke-width="1.8" stroke-linejoin="round"/>
<path d="M1809.1 942.2 L1816.3 949.3000000000001 H1809.1 Z" fill="#a8a8a8"/>
<path d="M1803.9 950.8000000000001 Q1801.9 950.8000000000001 1801.9 952.9000000000001 V955.1 Q1801.9 956.8000000000001 1799.9 956.8000000000001 Q1801.9 956.8000000000001 1801.9 958.6 V960.9000000000001 Q1801.9 963.0 1803.9 963.0" stroke="#e4e4e4" stroke-width="1.5" fill="none"/>
<path d="M1808.1 950.8000000000001 Q1810.1 950.8000000000001 1810.1 952.9000000000001 V955.1 Q1810.1 956.8000000000001 1812.1 956.8000000000001 Q1810.1 956.8000000000001 1810.1 958.6 V960.9000000000001 Q1810.1 963.0 1808.1 963.0" stroke="#e4e4e4" stroke-width="1.5" fill="none"/>
<text x="1827.6" y="963.7" font-size="20.3" fill="#f2f2f2" textLength="100.3" lengthAdjust="spacingAndGlyphs" >de-DE.json</text>
<path d="M1779.0 989.4000000000001 V985.9000000000001 A2.5 2.5 0 0 1 1784.0 985.9000000000001 V989.4000000000001" stroke="#55a4ee" stroke-width="2" fill="none"/>
<rect x="1777.0" y="989.4000000000001" width="9" height="6.2" fill="#1f2a38" stroke="#55a4ee" stroke-width="2" rx="1"/>
<path d="M1796.3 978.0 H1809.4 L1815.5 984.1 V999.8000000000001 Q1815.5 1000.7 1814.5 1000.7 H1797.3 Q1796.3 1000.7 1796.3 999.7 Z" fill="#2c2c2c" stroke="#a8a8a8" stroke-width="1.8" stroke-linejoin="round"/>
<path d="M1809.1 977.2 L1816.3 984.3000000000001 H1809.1 Z" fill="#a8a8a8"/>
<path d="M1803.9 985.8000000000001 Q1801.9 985.8000000000001 1801.9 987.9000000000001 V990.1 Q1801.9 991.8000000000001 1799.9 991.8000000000001 Q1801.9 991.8000000000001 1801.9 993.6 V995.9000000000001 Q1801.9 998.0 1803.9 998.0" stroke="#e4e4e4" stroke-width="1.5" fill="none"/>
<path d="M1808.1 985.8000000000001 Q1810.1 985.8000000000001 1810.1 987.9000000000001 V990.1 Q1810.1 991.8000000000001 1812.1 991.8000000000001 Q1810.1 991.8000000000001 1810.1 993.6 V995.9000000000001 Q1810.1 998.0 1808.1 998.0" stroke="#e4e4e4" stroke-width="1.5" fill="none"/>
<text x="1827.6" y="998.7" font-size="20.3" fill="#f2f2f2" textLength="66.1" lengthAdjust="spacingAndGlyphs" >en.json</text>
<path d="M1779.0 1024.4 V1020.9000000000001 A2.5 2.5 0 0 1 1784.0 1020.9000000000001 V1024.4" stroke="#55a4ee" stroke-width="2" fill="none"/>
<rect x="1777.0" y="1024.4" width="9" height="6.2" fill="#1f2a38" stroke="#55a4ee" stroke-width="2" rx="1"/>
<path d="M1796.3 1013.0 H1809.4 L1815.5 1019.1 V1034.8 Q1815.5 1035.7 1814.5 1035.7 H1797.3 Q1796.3 1035.7 1796.3 1034.7 Z" fill="#2c2c2c" stroke="#a8a8a8" stroke-width="1.8" stroke-linejoin="round"/>
<path d="M1809.1 1012.2 L1816.3 1019.3000000000001 H1809.1 Z" fill="#a8a8a8"/>
<path d="M1803.9 1020.8000000000001 Q1801.9 1020.8000000000001 1801.9 1022.9000000000001 V1025.1000000000001 Q1801.9 1026.8 1799.9 1026.8 Q1801.9 1026.8 1801.9 1028.6000000000001 V1030.9 Q1801.9 1033.0 1803.9 1033.0" stroke="#e4e4e4" stroke-width="1.5" fill="none"/>
<path d="M1808.1 1020.8000000000001 Q1810.1 1020.8000000000001 1810.1 1022.9000000000001 V1025.1000000000001 Q1810.1 1026.8 1812.1 1026.8 Q1810.1 1026.8 1810.1 1028.6000000000001 V1030.9 Q1810.1 1033.0 1808.1 1033.0" stroke="#e4e4e4" stroke-width="1.5" fill="none"/>
<text x="1827.6" y="1033.7" font-size="20.3" fill="#f2f2f2" textLength="63.1" lengthAdjust="spacingAndGlyphs" >es.json</text>
<path d="M1779.0 1059.4 V1055.9 A2.5 2.5 0 0 1 1784.0 1055.9 V1059.4" stroke="#55a4ee" stroke-width="2" fill="none"/>
<rect x="1777.0" y="1059.4" width="9" height="6.2" fill="#1f2a38" stroke="#55a4ee" stroke-width="2" rx="1"/>
<path d="M1796.3 1048.0 H1809.4 L1815.5 1054.1000000000001 V1069.8 Q1815.5 1070.7 1814.5 1070.7 H1797.3 Q1796.3 1070.7 1796.3 1069.7 Z" fill="#2c2c2c" stroke="#a8a8a8" stroke-width="1.8" stroke-linejoin="round"/>
<path d="M1809.1 1047.2 L1816.3 1054.3 H1809.1 Z" fill="#a8a8a8"/>
<path d="M1803.9 1055.8 Q1801.9 1055.8 1801.9 1057.9 V1060.1000000000001 Q1801.9 1061.8 1799.9 1061.8 Q1801.9 1061.8 1801.9 1063.6000000000001 V1065.9 Q1801.9 1068.0 1803.9 1068.0" stroke="#e4e4e4" stroke-width="1.5" fill="none"/>
<path d="M1808.1 1055.8 Q1810.1 1055.8 1810.1 1057.9 V1060.1000000000001 Q1810.1 1061.8 1812.1 1061.8 Q1810.1 1061.8 1810.1 1063.6000000000001 V1065.9 Q1810.1 1068.0 1808.1 1068.0" stroke="#e4e4e4" stroke-width="1.5" fill="none"/>
<text x="1827.6" y="1068.7" font-size="20.3" fill="#f2f2f2" textLength="55.1" lengthAdjust="spacingAndGlyphs" >fi.json</text>
<path d="M1779.0 1094.4 V1090.9 A2.5 2.5 0 0 1 1784.0 1090.9 V1094.4" stroke="#55a4ee" stroke-width="2" fill="none"/>
<rect x="1777.0" y="1094.4" width="9" height="6.2" fill="#1f2a38" stroke="#55a4ee" stroke-width="2" rx="1"/>
<path d="M1796.3 1083.0 H1809.4 L1815.5 1089.1000000000001 V1104.8 Q1815.5 1105.7 1814.5 1105.7 H1797.3 Q1796.3 1105.7 1796.3 1104.7 Z" fill="#2c2c2c" stroke="#a8a8a8" stroke-width="1.8" stroke-linejoin="round"/>
<path d="M1809.1 1082.2 L1816.3 1089.3 H1809.1 Z" fill="#a8a8a8"/>
<path d="M1803.9 1090.8 Q1801.9 1090.8 1801.9 1092.9 V1095.1000000000001 Q1801.9 1096.8 1799.9 1096.8 Q1801.9 1096.8 1801.9 1098.6000000000001 V1100.9 Q1801.9 1103.0 1803.9 1103.0" stroke="#e4e4e4" stroke-width="1.5" fill="none"/>
<path d="M1808.1 1090.8 Q1810.1 1090.8 1810.1 1092.9 V1095.1000000000001 Q1810.1 1096.8 1812.1 1096.8 Q1810.1 1096.8 1810.1 1098.6000000000001 V1100.9 Q1810.1 1103.0 1808.1 1103.0" stroke="#e4e4e4" stroke-width="1.5" fill="none"/>
<text x="1827.6" y="1103.7" font-size="20.3" fill="#f2f2f2" textLength="57.2" lengthAdjust="spacingAndGlyphs" >fr.json</text>
<path d="M1779.0 1129.4 V1125.9 A2.5 2.5 0 0 1 1784.0 1125.9 V1129.4" stroke="#55a4ee" stroke-width="2" fill="none"/>
<rect x="1777.0" y="1129.4" width="9" height="6.2" fill="#1f2a38" stroke="#55a4ee" stroke-width="2" rx="1"/>
<path d="M1796.3 1118.0 H1809.4 L1815.5 1124.1000000000001 V1139.8 Q1815.5 1140.7 1814.5 1140.7 H1797.3 Q1796.3 1140.7 1796.3 1139.7 Z" fill="#2c2c2c" stroke="#a8a8a8" stroke-width="1.8" stroke-linejoin="round"/>
<path d="M1809.1 1117.2 L1816.3 1124.3 H1809.1 Z" fill="#a8a8a8"/>
<path d="M1803.9 1125.8 Q1801.9 1125.8 1801.9 1127.9 V1130.1000000000001 Q1801.9 1131.8 1799.9 1131.8 Q1801.9 1131.8 1801.9 1133.6000000000001 V1135.9 Q1801.9 1138.0 1803.9 1138.0" stroke="#e4e4e4" stroke-width="1.5" fill="none"/>
<path d="M1808.1 1125.8 Q1810.1 1125.8 1810.1 1127.9 V1130.1000000000001 Q1810.1 1131.8 1812.1 1131.8 Q1810.1 1131.8 1810.1 1133.6000000000001 V1135.9 Q1810.1 1138.0 1808.1 1138.0" stroke="#e4e4e4" stroke-width="1.5" fill="none"/>
<text x="1827.6" y="1138.7" font-size="20.3" fill="#f2f2f2" textLength="60.2" lengthAdjust="spacingAndGlyphs" >hi.json</text>
<path d="M1779.0 1164.4 V1160.9 A2.5 2.5 0 0 1 1784.0 1160.9 V1164.4" stroke="#55a4ee" stroke-width="2" fill="none"/>
<rect x="1777.0" y="1164.4" width="9" height="6.2" fill="#1f2a38" stroke="#55a4ee" stroke-width="2" rx="1"/>
<path d="M1796.3 1153.0 H1809.4 L1815.5 1159.1000000000001 V1174.8 Q1815.5 1175.7 1814.5 1175.7 H1797.3 Q1796.3 1175.7 1796.3 1174.7 Z" fill="#2c2c2c" stroke="#a8a8a8" stroke-width="1.8" stroke-linejoin="round"/>
<path d="M1809.1 1152.2 L1816.3 1159.3 H1809.1 Z" fill="#a8a8a8"/>
<path d="M1803.9 1160.8 Q1801.9 1160.8 1801.9 1162.9 V1165.1000000000001 Q1801.9 1166.8 1799.9 1166.8 Q1801.9 1166.8 1801.9 1168.6000000000001 V1170.9 Q1801.9 1173.0 1803.9 1173.0" stroke="#e4e4e4" stroke-width="1.5" fill="none"/>
<path d="M1808.1 1160.8 Q1810.1 1160.8 1810.1 1162.9 V1165.1000000000001 Q1810.1 1166.8 1812.1 1166.8 Q1810.1 1166.8 1810.1 1168.6000000000001 V1170.9 Q1810.1 1173.0 1808.1 1173.0" stroke="#e4e4e4" stroke-width="1.5" fill="none"/>
<text x="1827.6" y="1173.7" font-size="20.3" fill="#f2f2f2" textLength="55.1" lengthAdjust="spacingAndGlyphs" >it.json</text>
<path d="M1779.0 1199.4 V1195.9 A2.5 2.5 0 0 1 1784.0 1195.9 V1199.4" stroke="#55a4ee" stroke-width="2" fill="none"/>
<rect x="1777.0" y="1199.4" width="9" height="6.2" fill="#1f2a38" stroke="#55a4ee" stroke-width="2" rx="1"/>
<path d="M1796.3 1188.0 H1809.4 L1815.5 1194.1000000000001 V1209.8 Q1815.5 1210.7 1814.5 1210.7 H1797.3 Q1796.3 1210.7 1796.3 1209.7 Z" fill="#2c2c2c" stroke="#a8a8a8" stroke-width="1.8" stroke-linejoin="round"/>
<path d="M1809.1 1187.2 L1816.3 1194.3 H1809.1 Z" fill="#a8a8a8"/>
<path d="M1803.9 1195.8 Q1801.9 1195.8 1801.9 1197.9 V1200.1000000000001 Q1801.9 1201.8 1799.9 1201.8 Q1801.9 1201.8 1801.9 1203.6000000000001 V1205.9 Q1801.9 1208.0 1803.9 1208.0" stroke="#e4e4e4" stroke-width="1.5" fill="none"/>
<path d="M1808.1 1195.8 Q1810.1 1195.8 1810.1 1197.9 V1200.1000000000001 Q1810.1 1201.8 1812.1 1201.8 Q1810.1 1201.8 1810.1 1203.6000000000001 V1205.9 Q1810.1 1208.0 1808.1 1208.0" stroke="#e4e4e4" stroke-width="1.5" fill="none"/>
<text x="1827.6" y="1208.7" font-size="20.3" fill="#f2f2f2" textLength="95.3" lengthAdjust="spacingAndGlyphs" >pt-BR.json</text>
<path d="M1779.0 1234.4 V1230.9 A2.5 2.5 0 0 1 1784.0 1230.9 V1234.4" stroke="#55a4ee" stroke-width="2" fill="none"/>
<rect x="1777.0" y="1234.4" width="9" height="6.2" fill="#1f2a38" stroke="#55a4ee" stroke-width="2" rx="1"/>
<path d="M1796.3 1223.0 H1809.4 L1815.5 1229.1000000000001 V1244.8 Q1815.5 1245.7 1814.5 1245.7 H1797.3 Q1796.3 1245.7 1796.3 1244.7 Z" fill="#2c2c2c" stroke="#a8a8a8" stroke-width="1.8" stroke-linejoin="round"/>
<path d="M1809.1 1222.2 L1816.3 1229.3 H1809.1 Z" fill="#a8a8a8"/>
<path d="M1803.9 1230.8 Q1801.9 1230.8 1801.9 1232.9 V1235.1000000000001 Q1801.9 1236.8 1799.9 1236.8 Q1801.9 1236.8 1801.9 1238.6000000000001 V1240.9 Q1801.9 1243.0 1803.9 1243.0" stroke="#e4e4e4" stroke-width="1.5" fill="none"/>
<path d="M1808.1 1230.8 Q1810.1 1230.8 1810.1 1232.9 V1235.1000000000001 Q1810.1 1236.8 1812.1 1236.8 Q1810.1 1236.8 1810.1 1238.6000000000001 V1240.9 Q1810.1 1243.0 1808.1 1243.0" stroke="#e4e4e4" stroke-width="1.5" fill="none"/>
<text x="1827.6" y="1243.7" font-size="20.3" fill="#f2f2f2" textLength="61.7" lengthAdjust="spacingAndGlyphs" >ru.json</text>
<path d="M1779.0 1269.4 V1265.9 A2.5 2.5 0 0 1 1784.0 1265.9 V1269.4" stroke="#55a4ee" stroke-width="2" fill="none"/>
<rect x="1777.0" y="1269.4" width="9" height="6.2" fill="#1f2a38" stroke="#55a4ee" stroke-width="2" rx="1"/>
<path d="M1796.3 1258.0 H1809.4 L1815.5 1264.1000000000001 V1279.8 Q1815.5 1280.7 1814.5 1280.7 H1797.3 Q1796.3 1280.7 1796.3 1279.7 Z" fill="#2c2c2c" stroke="#a8a8a8" stroke-width="1.8" stroke-linejoin="round"/>
<path d="M1809.1 1257.2 L1816.3 1264.3 H1809.1 Z" fill="#a8a8a8"/>
<path d="M1803.9 1265.8 Q1801.9 1265.8 1801.9 1267.9 V1270.1000000000001 Q1801.9 1271.8 1799.9 1271.8 Q1801.9 1271.8 1801.9 1273.6000000000001 V1275.9 Q1801.9 1278.0 1803.9 1278.0" stroke="#e4e4e4" stroke-width="1.5" fill="none"/>
<path d="M1808.1 1265.8 Q1810.1 1265.8 1810.1 1267.9 V1270.1000000000001 Q1810.1 1271.8 1812.1 1271.8 Q1810.1 1271.8 1810.1 1273.6000000000001 V1275.9 Q1810.1 1278.0 1808.1 1278.0" stroke="#e4e4e4" stroke-width="1.5" fill="none"/>
<text x="1827.6" y="1278.7" font-size="20.3" fill="#f2f2f2" textLength="61.7" lengthAdjust="spacingAndGlyphs" >sk.json</text>
<path d="M1779.0 1304.4 V1300.9 A2.5 2.5 0 0 1 1784.0 1300.9 V1304.4" stroke="#55a4ee" stroke-width="2" fill="none"/>
<rect x="1777.0" y="1304.4" width="9" height="6.2" fill="#1f2a38" stroke="#55a4ee" stroke-width="2" rx="1"/>
<path d="M1796.3 1293.0 H1809.4 L1815.5 1299.1000000000001 V1314.8 Q1815.5 1315.7 1814.5 1315.7 H1797.3 Q1796.3 1315.7 1796.3 1314.7 Z" fill="#2c2c2c" stroke="#a8a8a8" stroke-width="1.8" stroke-linejoin="round"/>
<path d="M1809.1 1292.2 L1816.3 1299.3 H1809.1 Z" fill="#a8a8a8"/>
<path d="M1803.9 1300.8 Q1801.9 1300.8 1801.9 1302.9 V1305.1000000000001 Q1801.9 1306.8 1799.9 1306.8 Q1801.9 1306.8 1801.9 1308.6000000000001 V1310.9 Q1801.9 1313.0 1803.9 1313.0" stroke="#e4e4e4" stroke-width="1.5" fill="none"/>
<path d="M1808.1 1300.8 Q1810.1 1300.8 1810.1 1302.9 V1305.1000000000001 Q1810.1 1306.8 1812.1 1306.8 Q1810.1 1306.8 1810.1 1308.6000000000001 V1310.9 Q1810.1 1313.0 1808.1 1313.0" stroke="#e4e4e4" stroke-width="1.5" fill="none"/>
<text x="1827.6" y="1313.7" font-size="20.3" fill="#f2f2f2" textLength="57.2" lengthAdjust="spacingAndGlyphs" >sl.json</text>
</svg>
<g transform="translate(1738.8 59) scale(1.0)" fill="#1f1f1f" stroke="#1f1f1f" stroke-width="2.2" stroke-linejoin="round"><path d="M0 3.9 L1.9 3.2 V12.8 L0 12.1 Z"/><path d="M12.2 0 L16 1.6 V14.4 L12.2 16 Z"/><path d="M1.2 11.8 L13 1.2 M1.2 4.2 L13 14.8" stroke-width="4.8"/><path d="M2 5 L12.5 5 L12.5 11 L2 11 Z"/></g>
<g transform="translate(1738.8 59) scale(1.0)" fill="#8b6cf0"><path d="M0 3.9 L1.9 3.2 V12.8 L0 12.1 Z"/><path d="M12.2 0 L16 1.6 V14.4 L12.2 16 Z"/><path d="M1.2 11.8 L13 1.2 M1.2 4.2 L13 14.8" stroke="#8b6cf0" stroke-width="2.6" stroke-linecap="butt"/></g>
<rect x="1609" y="1316" width="384" height="1" fill="#3a3a3a" />
<path d="M1607.5 1316 V1353.5 H1785 V1316" fill="none" stroke="#3a3a3a" stroke-width="2"/>
<rect x="1609" y="1316" width="175" height="37" fill="#1f1f1f" />
<text x="1617" y="1343.3" font-size="20.3" fill="#f0f0f0" textLength="157" lengthAdjust="spacingAndGlyphs" >Solution Explorer</text>
<text x="1797" y="1343.3" font-size="20.3" fill="#a8a8a8" textLength="111" lengthAdjust="spacingAndGlyphs" >Git Changes</text>
<path d="M1608 1547 V1366 H1993" fill="none" stroke="#3a3a3a" stroke-width="2"/>
<text x="1617" y="1397" font-size="20.6" fill="#b4b4b4" textLength="92" lengthAdjust="spacingAndGlyphs" >Properties</text>
<rect x="1609" y="1408" width="384" height="35.5" fill="#3f3f3f" />
<rect x="1609" y="1489" width="384" height="1" fill="#2e2e2e" />
<rect x="1612.5" y="1447.5" width="39" height="37" fill="#2a2a2a" stroke="#7160e8" stroke-width="1.5"/>
<rect x="1695" y="1448" width="1" height="38" fill="#3a3a3a" />
<filter id="shd" x="-5%" y="-5%" width="110%" height="110%"><feGaussianBlur stdDeviation="7"/></filter>
<rect x="562" y="17.6" width="685" height="1526.4" rx="12" fill="#000" opacity="0.22" filter="url(#shd)"/>
<clipPath id="emu"><rect x="564" y="13.6" width="681" height="1526.4" rx="11"/></clipPath>
<g clip-path="url(#emu)">
<rect x="564" y="13.6" width="681" height="1526.4" fill="#ffffff" />
<rect x="564" y="64.2" width="681" height="41.3" fill="#2b0b98" />
<rect x="564" y="105.5" width="681" height="97.5" fill="#512bd4" />
<rect x="564" y="1457" width="681" height="83" fill="#000000" />
</g>
<rect x="563.25" y="12.85" width="682.5" height="1527.9" rx="11.5" fill="none" stroke="#474747" stroke-width="1.5"/>
<text x="577" y="47" font-size="20.2" fill="#8c8c8c" textLength="380" lengthAdjust="spacingAndGlyphs" >Android Emulator - pixel_5_-_api_31:5554</text>
<text x="579" y="94.3" font-size="24" fill="#ffffff" textLength="59" lengthAdjust="spacingAndGlyphs" >11:03</text>
<rect x="662" y="76" width="16" height="18" rx="1.5" fill="#ffffff"/>
<path d="M666.6 88.6 L670 79.8 L673.4 88.6 M667.9 85.3 H672.1" stroke="#2b0b98" stroke-width="2.1" fill="none"/>
<circle cx="671.2" cy="91.6" r="0.7" fill="#2b0b98"/><circle cx="673.4" cy="91.6" r="0.7" fill="#2b0b98"/><circle cx="675.6" cy="91.6" r="0.7" fill="#2b0b98"/>
<path d="M715.6 83.4 A6.85 6.85 0 0 0 701.9 83.4 V85.3 H715.6 V88 A6.85 6.85 0 0 1 701.9 88" stroke="#ffffff" stroke-width="2" fill="none"/>
<circle cx="706.5" cy="80.9" r="1.05" fill="#ffffff"/><circle cx="710.9" cy="80.9" r="1.05" fill="#ffffff"/>
<path d="M703.3 77.3 L702 75.2 M714.1 77.3 L715.4 75.2" stroke="#ffffff" stroke-width="1.9"/>
<path d="M1151 94 L1169.8 75.2 V79.5 M1151 94 H1164" stroke="#ffffff" stroke-width="2.2" fill="none" stroke-linejoin="miter"/>
<path d="M1148.8 95.2 L1170.8 73.5 V76.5 L1152 95.2 Z" fill="#ffffff"/>
<rect x="1167.6" y="81" width="2.6" height="8.5" fill="#ffffff"/><rect x="1167.6" y="91.6" width="2.6" height="3.4" fill="#ffffff"/>
<rect x="1183" y="76" width="13.5" height="19.6" rx="1.6" fill="#ffffff"/><rect x="1186.5" y="73.6" width="6.5" height="3.5" rx="1" fill="#ffffff"/>
<rect x="596" y="142" width="33" height="4" fill="#ffffff" />
<rect x="596" y="151" width="33" height="4" fill="#ffffff" />
<rect x="596" y="160" width="33" height="4" fill="#ffffff" />
<text x="616" y="665.6" font-size="32.3" fill="#212121" textLength="496" lengthAdjust="spacingAndGlyphs" >Welcome to the application. This is</text>
<text x="616" y="708.1" font-size="32.3" fill="#212121" textLength="499" lengthAdjust="spacingAndGlyphs" >a startup project based on the ABP</text>
<text x="616" y="751.2" font-size="32.3" fill="#212121" textLength="552" lengthAdjust="spacingAndGlyphs" >framework. For more information visit</text>
<text x="616" y="793.9" font-size="32.3" fill="#212121" textLength="97" lengthAdjust="spacingAndGlyphs" >abp.io.</text>
<rect x="731" y="847" width="347" height="68" rx="13.5" fill="#512bd4"/>
<rect x="731" y="958.5" width="347" height="68" rx="13.5" fill="#512bd4"/>
<text x="774" y="890.3" font-size="25.2" fill="#ffffff" textLength="262" lengthAdjust="spacingAndGlyphs" >Login to the application</text>
<text x="808.5" y="1002" font-size="25" fill="#ffffff" textLength="193" lengthAdjust="spacingAndGlyphs" >Change language</text>
<path d="M718.6 1485.5 V1512 Q718.6 1514 716.6 1512.8 L695 1500 Q693.5 1499 695 1498 L716.6 1485.3 Q718.6 1484 718.6 1486 Z" fill="#9c9a9d"/>
<circle cx="904.2" cy="1498.4" r="12.6" fill="#9c9a9d"/>
<rect x="1087" y="1485.5" width="26.2" height="26.2" rx="2" fill="#9c9a9d"/>
<rect x="1246.2" y="64.7" width="72.6" height="596.6" fill="#f0f0f0" stroke="#000000" stroke-width="1.5"/>
<path d="M1263.5 88 H1270.6" stroke="#8a8a8a" stroke-width="1.3"/>
<path d="M1295 85 L1301.3 91.3 M1301.3 85 L1295 91.3" stroke="#637987" stroke-width="1.4"/>
<path d="M1276.3 125.2 A8.3 8.3 0 1 0 1287.7 125.2" stroke="#637987" stroke-width="2.2" fill="none"/><path d="M1282 122.8 V132.5" stroke="#637987" stroke-width="2.2"/>
<path d="M1273 178.5 H1276.6 L1282 173.2 V191 L1276.6 185.5 H1273 Z" fill="#637987"/>
<path d="M1284 176.5 A6 6 0 0 1 1284 187.3 Z" fill="#637987"/><path d="M1284 173.5 A8.6 8.6 0 0 1 1284 190.5" stroke="#637987" stroke-width="1.8" fill="none"/>
<path d="M1275 228.5 H1278.6 L1284 223.8 V240 L1278.6 235.2 H1275 Z" fill="#637987"/><path d="M1286 227.5 A4.8 4.8 0 0 1 1286 236.5 Z" fill="#637987"/>
<g transform="translate(1282 283) rotate(-45)"><rect x="-5.5" y="-8.8" width="11" height="17.6" rx="1.4" fill="none" stroke="#637987" stroke-width="2.6"/></g>
<path d="M1283.5 270.7 A10.5 10.5 0 0 1 1293.5 281.5" stroke="#637987" stroke-width="1.3" fill="none"/><path d="M1282.6 269.3 L1286 272.2 L1282.6 273.6 Z" fill="#637987"/>
<g transform="translate(1282 333) rotate(45)"><rect x="-5.5" y="-8.8" width="11" height="17.6" rx="1.4" fill="none" stroke="#637987" stroke-width="2.6"/></g>
<path d="M1280.5 320.7 A10.5 10.5 0 0 0 1270.5 331.5" stroke="#637987" stroke-width="1.3" fill="none"/><path d="M1281.4 319.3 L1278 322.2 L1281.4 323.6 Z" fill="#637987"/>
<path d="M1273 376.5 Q1273 375.5 1274 375.5 H1277.5 L1279 373.3 H1285 L1286.5 375.5 H1290 Q1291 375.5 1291 376.5 V388.5 Q1291 389.5 1290 389.5 H1274 Q1273 389.5 1273 388.5 Z" fill="#637987"/><circle cx="1282" cy="382.2" r="4" fill="#efefef"/><circle cx="1282" cy="382.2" r="2.5" fill="#637987"/>
<circle cx="1279.8" cy="429.6" r="5.6" fill="none" stroke="#637987" stroke-width="1.7"/><path d="M1284 433.8 L1290 439.8" stroke="#637987" stroke-width="2.2"/><path d="M1277 429.6 H1282.6 M1279.8 426.8 V432.4" stroke="#637987" stroke-width="1.2"/>
<path d="M1288 474.6 V489.6 L1276.4 482.1 Z" fill="none" stroke="#637987" stroke-width="1.7" stroke-linejoin="round"/>
<circle cx="1282" cy="531.8" r="6.4" fill="none" stroke="#637987" stroke-width="1.7"/>
<rect x="1276" y="575.9" width="12.6" height="12.6" rx="1" fill="none" stroke="#637987" stroke-width="1.7"/>
<circle cx="1276" cy="632" r="1.9" fill="#637987"/><circle cx="1282" cy="632" r="1.9" fill="#637987"/><circle cx="1288" cy="632" r="1.9" fill="#637987"/>
<g fill="#d6d6d6"><rect x="1620" y="1454" width="9" height="9"/><rect x="1630" y="1454.5" width="10" height="3"/><rect x="1630" y="1459" width="10" height="3"/><rect x="1631" y="1463.5" width="9" height="3"/><rect x="1620" y="1469" width="9" height="9"/><rect x="1630" y="1470" width="10" height="3"/><rect x="1630" y="1475" width="10" height="3"/><rect x="1641" y="1457" width="4" height="3"/><rect x="1641" y="1462" width="4" height="3"/><rect x="1641" y="1468" width="4" height="3"/><rect x="1641" y="1476" width="4" height="3"/></g>
<g stroke="#2a2a2a" stroke-width="1.2"><path d="M1621.5 1458.5 H1627.5 M1624.5 1455.5 V1461.5 M1621.5 1473.5 H1627.5 M1624.5 1470.5 V1476.5"/></g>
<path d="M1658 1452 H1675 V1469 H1658 Z" fill="#1f1f1f" stroke="#f0f0f0" stroke-width="1"/><rect x="1660.5" y="1454" width="12.5" height="13" fill="#cdcdcd"/>
<path d="M1662.6 1465 L1666.8 1456 L1671 1465 M1664 1462 H1669.6" stroke="#1f1f1f" stroke-width="1.9" fill="none"/>
<path d="M1661.7 1471.2 H1670.6 L1662.4 1478.2 H1671.2" stroke="#cdcdcd" stroke-width="2" fill="none"/>
<path d="M1677.3 1457.5 H1681.8 V1467 H1685.2 L1679.55 1476 L1674 1467 H1677.3 Z" fill="#63b3f5" stroke="#f0f0f0" stroke-width="0.8"/>
<path d="M1706.5 1477.5 L1721 1464" stroke="#d0d0d0" stroke-width="8.2" stroke-linecap="round"/><circle cx="1724.6" cy="1461.4" r="8.6" fill="#d0d0d0"/>
<path d="M1706.5 1477.5 L1721 1464" stroke="#8a8a8a" stroke-width="6.4" stroke-linecap="round"/><circle cx="1724.6" cy="1461.4" r="7.7" fill="#8a8a8a"/>
<path d="M1725.5 1459.5 L1731.5 1452.5" stroke="#1f1f1f" stroke-width="4.2" stroke-linecap="round"/>
<path d="M1708.5 1441.6 V1464 L1713.7 1459.6 L1717.6 1467.4 L1721.6 1465.6 L1718.6 1458.8 H1725.2 Z" fill="#ffffff" stroke="#111111" stroke-width="1.1" stroke-linejoin="miter"/>
</svg>
</body></html>
